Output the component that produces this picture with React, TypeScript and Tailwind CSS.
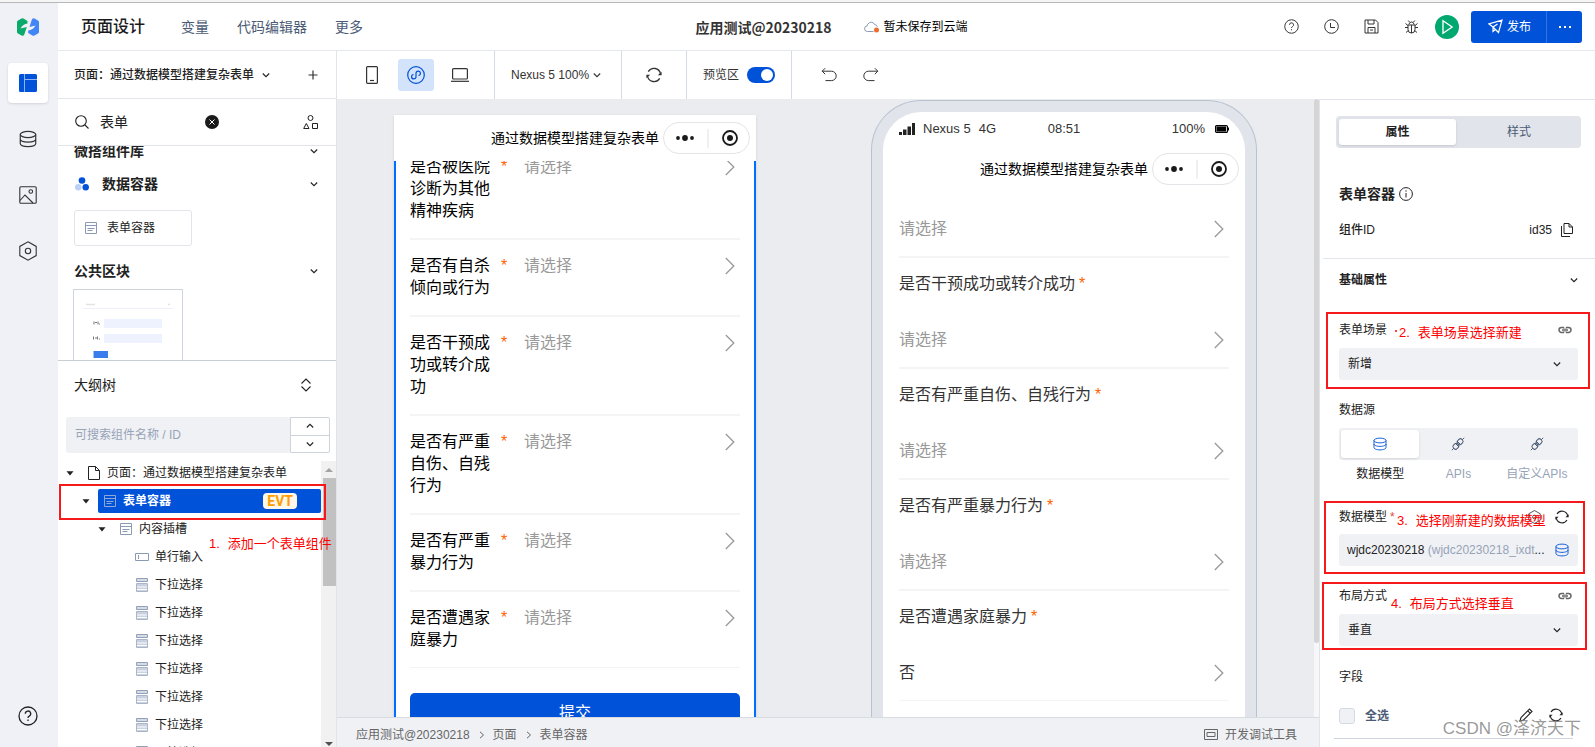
import React, { useState } from "react";

type IconProps = { className?: string; children?: React.ReactNode; box?: string; width?: number };

function Icon({ className = "size-4", children, box = "0 0 16 16", width = 1 }: IconProps) {
  return (
    <svg viewBox={box} className={className} fill="none" stroke="currentColor" strokeWidth={width} aria-hidden="true">
      {children}
    </svg>
  );
}

const ChevronDown = ({ className = "size-2.5 shrink-0" }: { className?: string }) => (
  <Icon className={className} box="0 0 10 10" width={1.1}>
    <path d="M1.800 3.500 5 6.700l3.200-3.200" />
  </Icon>
);

const ChevronUp = () => (
  <Icon className="size-2.5 shrink-0" box="0 0 10 10" width={1.1}>
    <path d="M1.800 6.500 5 3.300l3.200 3.200" />
  </Icon>
);

const ArrowRight = () => (
  <Icon className="h-[18px] w-2.5 shrink-0 text-[#999]" box="0 0 10 18" width={1.3}>
    <path d="M.8 1 8.800 9l-8 8" />
  </Icon>
);

const Refresh = ({ className = "size-4" }: { className?: string }) => (
  <Icon className={className} width={1.3}>
    <path d="M2.300 4.600A6.600 6.600 0 0 1 14.500 7M13.700 11.400A6.600 6.600 0 0 1 1.500 9" />
    <path d="M15.600 4.800V8.200H11.800zM.4 11.200V7.800H4.200z" fill="currentColor" stroke="none" />
  </Icon>
);

const Database = ({ className = "size-5" }: { className?: string }) => (
  <Icon className={className} box="0 0 20 20" width={1.3}>
    <ellipse cx="10" cy="5" rx="8.600" ry="3.400" />
    <path d="M1.400 5v10c0 1.900 3.800 3.400 8.600 3.400s8.600-1.500 8.600-3.400V5M1.400 10c0 1.900 3.800 3.400 8.600 3.400s8.600-1.500 8.600-3.400" />
  </Icon>
);

const FormIcon = ({ className = "size-3 shrink-0 text-[#8a9ab5]" }: { className?: string }) => (
  <Icon className={className} box="0 0 12 12">
    <path d="M.5.5h11v11H.5zM.5 3.500h11" />
    <path d="M2.500 6.500h7M2.500 8.500h5" />
  </Icon>
);

const InputIcon = () => (
  <Icon className="h-3.5 w-3.5 shrink-0 text-[#8a9ab5]" box="0 0 14 14">
    <path d="M.5 3.500h13v7H.5zM3.500 5v4" />
  </Icon>
);

const SelectIcon = () => (
  <svg viewBox="0 0 14 14" className="h-3.5 w-3.5 shrink-0" fill="none" aria-hidden="true">
    <path d="M1.500.5h11v3h-11z" fill="#d5dbe6" stroke="#93a1b8" />
    <path d="M2 4h10v1H2z" fill="#fff" />
    <path d="M1.500 5.500h11v8h-11z" fill="#fff" stroke="#a9b5c8" />
    <path d="M2 6h10v2.500H2zM2 9.500h10v1.500H2zM2 12h10v1H2z" fill="#c9d1de" />
  </svg>
);

const LinkIcon = () => (
  <Icon className="h-2 w-3.5 text-[#666]" box="0 0 14 8" width={1.500}>
    <path d="M6 1.500H3.500a2.500 2.500 0 0 0 0 5H6M8 1.500h2.500a2.500 2.500 0 0 1 0 5H8M4 4h6" />
    <path d="M6 1.500V3M8 6.500V5M6 6.500V5M8 1.500V3" strokeWidth={0.8} />
  </Icon>
);

const PlugIcon = () => (
  <Icon className="size-3.5 text-[#4b5b76]" box="0 0 14 14">
    <path d="M.8 13.200l2-2M11.200 2.800l2-2" />
    <rect x="-3.300" y="-2.500" width="5.800" height="5" rx="2" transform="translate(5.200 9) rotate(-45)" />
    <rect x="-2.500" y="-2.500" width="5.800" height="5" rx="2" transform="translate(8.800 5) rotate(-45)" />
    <path d="M4 6l4 4M6 4l4 4" />
  </Icon>
);

const HelpIcon = ({ className = "size-[15px]" }: { className?: string }) => (
  <Icon className={className} box="0 0 20 20" width={1.3}>
    <circle cx="10" cy="10" r="9" />
    <path d="M7.300 7.800a2.700 2.700 0 1 1 4 2.300c-.9.5-1.300 1-1.300 1.900M10 13.500v1.500" />
  </Icon>
);

const HexIcon = ({ className = "h-5 w-[18px]" }: { className?: string }) => (
  <Icon className={className} box="0 0 18 20" width={1.1}>
    <path d="M9 .8 17.200 5.400v9.200L9 19.200.8 14.600V5.400z" />
    <circle cx="9" cy="10" r="2.700" />
  </Icon>
);

function Rail() {
  return (
    <nav aria-label="主导航" className="flex w-[58px] shrink-0 flex-col items-center bg-[#f0f1f6] pr-0.5 pb-[21px]">
      <a href="#home" aria-label="首页" className="mt-[15px] block">
        <svg viewBox="0 0 22 18" className="h-[18px] w-[22px]" aria-hidden="true">
          <path d="M0 4Q0 3 1 2.400L4.600.4Q5.500-.1 6.500.5L10.500 3 10.500 5.500Q6 6 3.500 10.500L9.800 9 7.300 16.500Q6.500 18.500 4.500 17.500L1 15.500Q0 14.900 0 13.900z" fill="#0aaa6d" />
          <path d="M22 4v9.800q0 1.100-1 1.700l-3.500 2q-1.100.6-2.100 0L11.200 15v-2.400Q16 12 18.500 7.500L12.500 9 14.700 2Q15.500-.5 17.500.5l3.500 2Q22 3 22 4z" fill="#4285f4" />
        </svg>
      </a>
      <button aria-label="页面" className="mt-[27px] flex size-10 items-center justify-center rounded bg-white shadow-sm">
        <svg viewBox="0 0 18 18" className="size-[18px]" aria-hidden="true">
          <path d="M0 1.500Q0 0 1.500 0H5v18H1.500Q0 18 0 16.500zM6 0h10.500Q18 0 18 1.500V5H6zM6 6h12v10.500q0 1.500-1.500 1.500H6z" fill="#0052d9" />
          <path d="M5.500 0v18M5.500 5.500H18" stroke="#8fb5f5" />
        </svg>
      </button>
      <button aria-label="数据" className="mt-[26px] flex size-5 items-center justify-center text-[#333]"><Database className="size-[18px]" /></button>
      <button aria-label="素材" className="mt-9 flex size-5 items-center justify-center text-[#333]">
        <Icon className="size-[18px]" box="0 0 18 18" width={1.1}>
          <rect x=".8" y=".8" width="16.400" height="16.400" rx="1" />
          <circle cx="11.800" cy="5.500" r="1.800" />
          <path d="M1 14.500l5-5.500 8 8" />
        </Icon>
      </button>
      <button aria-label="设置" className="mt-9 flex size-5 items-center justify-center text-[#333]"><HexIcon /></button>
      <button aria-label="帮助" className="mt-auto flex size-5 items-center justify-center text-[#222]"><HelpIcon className="size-5" /></button>
    </nav>
  );
}

function Header() {
  return (
    <header className="flex h-12 shrink-0 items-center border-b border-[#e5e8f0] bg-white pr-[13px] pl-[23px]">
      <nav aria-label="页面菜单" className="flex flex-1 items-center text-sm text-[#4b5b76]">
        <h1 className="mr-9 text-base font-medium text-[#1a1a1a]">页面设计</h1>
        <a href="#vars" className="mr-7">变量</a>
        <a href="#code" className="mr-7">代码编辑器</a>
        <a href="#more">更多</a>
      </nav>
      <div className="flex items-center">
        <strong className="mr-8 font-['Noto_Sans_CJK_SC',sans-serif] text-sm font-bold text-[#333]">应用测试@20230218</strong>
        <svg viewBox="0 0 16 12" className="mr-1 h-3 w-4" fill="none" aria-hidden="true">
          <path d="M9.500 10.500H3.500a2.800 2.800 0 0 1-.3-5.600Q2.900 3.500 4 3A3.600 3.600 0 0 1 10.500 3.500a3 3 0 0 1 2.800 2.200" stroke="#8a9ab5" />
          <circle cx="12.500" cy="9" r="2.500" fill="#ed6b2d" />
        </svg>
        <span className="text-xs text-black">暂未保存到云端</span>
      </div>
      <div className="flex flex-1 items-center justify-end text-[#333]">
        <div className="mr-4 flex items-center gap-[25px]">
          <button aria-label="帮助"><HelpIcon /></button>
          <button aria-label="历史">
            <Icon className="size-[15px]" box="0 0 15 15"><circle cx="7.500" cy="7.500" r="6.800" /><path d="M6.500 4v4.500H11" /></Icon>
          </button>
          <button aria-label="保存">
            <Icon className="size-[15px]" box="0 0 15 15">
              <path d="M1 1h10.500L14 3.500V14H1zM4 1v4h6V1M4 14V8.500h7V14M6 11h3" />
            </Icon>
          </button>
          <button aria-label="调试">
            <Icon className="size-[15px]" box="0 0 15 15">
              <path d="M4 6h7v4.500a3.500 3.500 0 0 1-7 0zM5 5.500a2.500 2.500 0 0 1 5 0M7.500 6v8M4 8.500H1M11 8.500h3M4 6.500 1.500 4.500M11 6.500l2.500-2M4.300 11.500l-2.300 2M10.700 11.500l2.300 2M5.500 3 4.200 1.500M9.500 3l1.300-1.500" />
            </Icon>
          </button>
        </div>
        <button aria-label="预览" className="mr-3 flex size-6 items-center justify-center rounded-full bg-[#00a870] text-white">
          <Icon className="size-4" box="0 0 14 14" width={1.2}><path d="M3.500 1.500 11.500 7l-8 5.500z" /></Icon>
        </button>
        <div className="flex h-8 overflow-hidden rounded-[3px] bg-[#0052d9] text-xs text-white">
          <button className="flex w-[75px] items-center justify-center gap-1 pl-0.5">
            <Icon className="size-[15px]" box="0 0 15 15" width={1.2}><path d="M14 1.200.8 4.800 5 8l5.500 5.500zM5 8v4.500L7.300 10.500M5 8 9.500 5" /></Icon>
            发布
          </button>
          <button aria-label="更多发布选项" className="flex w-9 items-center justify-center border-l border-[#3375e0]">
            <svg viewBox="0 0 14 4" className="h-1 w-3.5" fill="currentColor" aria-hidden="true"><rect x="1" y="1" width="2" height="2" /><rect x="6" y="1" width="2" height="2" /><rect x="11" y="1" width="2" height="2" /></svg>
          </button>
        </div>
      </div>
    </header>
  );
}

function Toolbar() {
  const [preview, setPreview] = useState(true);
  return (
    <div className="flex h-12 shrink-0 bg-white text-xs text-[#333]">
      <div className="flex w-[158px] items-center border-r border-[#d5dbe4] pl-[29px]">
        <button aria-label="手机" className="mr-5">
          <Icon className="h-[18px] w-3" box="0 0 12 18" width={1.2}><rect x=".6" y=".6" width="10.800" height="16.800" rx="1" /><path d="M4 14.500h4" /></Icon>
        </button>
        <button aria-label="小程序" className="mr-[17px] flex h-8 w-9 items-center justify-center rounded-[3px] bg-[#d4e3fc] text-[#0052d9]">
          <Icon className="size-[18px]" box="0 0 18 18" width={1.2}>
            <circle cx="9" cy="9" r="8.300" />
            <path d="M6.500 8.500a2.200 2.200 0 1 0 2.500 2.300V7.200a2.200 2.200 0 1 1 2.500 2.300" />
          </Icon>
        </button>
        <button aria-label="电脑">
          <Icon className="h-3.5 w-[18px]" box="0 0 18 14" width={1.2}><rect x="1.600" y=".6" width="14.800" height="10.400" rx="1" /><path d="M0 13.300h18" /></Icon>
        </button>
      </div>
      <button className="flex w-[127px] items-center gap-[3px] border-r border-[#d5dbe4] pl-4">
        Nexus 5 100% <ChevronDown />
      </button>
      <button aria-label="刷新" className="flex w-[65px] items-center justify-center border-r border-[#d5dbe4]"><Refresh className="size-4" /></button>
      <div className="flex w-[105px] items-center justify-center gap-2 border-r border-[#d5dbe4]">
        <label htmlFor="preview-switch">预览区</label>
        <button id="preview-switch" role="switch" aria-checked={preview} onClick={() => setPreview(!preview)} className={preview ? "flex h-4 w-7 items-center justify-end rounded-full bg-[#0052d9] px-0.5" : "flex h-4 w-7 items-center rounded-full bg-gray-400 px-0.5"}>
          <span className="size-3 rounded-full bg-white" />
        </button>
      </div>
      <div className="flex items-center gap-[26px] pl-[29px]">
        <button aria-label="撤销">
          <Icon className="size-4"><path d="M4.200 1.200 1.200 4.200l3 3M1.200 4.200h9.300a4.700 4.700 0 0 1 0 9.400H4.500" /></Icon>
        </button>
        <button aria-label="重做">
          <Icon className="size-4"><path d="M11.800 1.200l3 3-3 3M14.800 4.200H5.500a4.700 4.700 0 0 0 0 9.400h6" /></Icon>
        </button>
      </div>
    </div>
  );
}

function ComponentLibrary() {
  return (
    <>
      <div className="flex h-[47px] shrink-0 items-center border-b border-[#e1e4ea] pr-[18px] pl-[17px] text-[#222]">
        <Icon className="mr-[11px] size-3.5 shrink-0" box="0 0 14 14" width={1.1}><circle cx="6" cy="6" r="5.300" /><path d="M10 10l3.500 3.500" /></Icon>
        <input aria-label="搜索组件" defaultValue="表单" className="w-[105px] text-sm outline-none" />
        <button aria-label="清空" className="flex size-3.5 items-center justify-center rounded-full bg-[#1a1a1a] text-white">
          <Icon className="size-2" box="0 0 8 8"><path d="M1.500 1.500l5 5M6.500 1.500l-5 5" /></Icon>
        </button>
        <button aria-label="组件分类" className="ml-auto">
          <Icon className="h-3.5 w-[15px]" box="0 0 15 14"><circle cx="7.500" cy="3" r="2.500" /><path d="M3.300 8.500 6 13.500H.7zM9.500 8.500h5v5h-5z" /></Icon>
        </button>
      </div>
      <div className="flex h-[215px] shrink-0 flex-col overflow-hidden border-b border-[#c9cdd4] px-4 text-sm font-bold text-[#222]">
        <button className="-mt-[5px] flex h-5 shrink-0 items-center justify-between pr-px">微搭组件库 <ChevronDown /></button>
        <button className="mt-[13px] flex h-5 shrink-0 items-center pr-px">
          <svg viewBox="0 0 14 14" className="mr-[13px] ml-px size-3.5" aria-hidden="true"><circle cx="7" cy="3.500" r="3.300" fill="#0052d9" /><circle cx="3.200" cy="10.300" r="3.200" fill="#bbd0f8" /><circle cx="10.700" cy="10.300" r="3.200" fill="#0052d9" /></svg>
          数据容器 <span className="ml-auto"><ChevronDown /></span>
        </button>
        <button className="mt-4 flex h-9 w-[118px] shrink-0 items-center gap-2.5 rounded-[3px] border border-[#e1e4ea] pl-2.5 text-xs font-normal"><FormIcon />表单容器</button>
        <button className="mt-[15px] flex h-5 shrink-0 items-center justify-between pr-px">公共区块 <ChevronDown /></button>
        <button aria-label="表单区块" className="mt-2 -ml-px w-[110px] shrink-0 border border-[#cfd5df]">
          <svg viewBox="0 0 108 100" className="h-[100px] w-[108px]" aria-hidden="true">
            <path d="M12 14.500h9M94 14.500h2" stroke="#e3e3e3" strokeWidth="1.500" />
            <path d="M9 18.500h90" stroke="#eef1f8" />
            <path d="M30 29h58v9H30zM30 44h58v9H30z" fill="#eef2fe" />
            <path d="M20 31.500v3M21 32.500h2M24 31.500v3M25 34h1M19.500 46.500v3M21 48h2M23.500 46.500v3M25 49h1" stroke="#777" />
            <path d="M19.500 61H34v7H19.500z" fill="#3b7cec" />
          </svg>
        </button>
      </div>
    </>
  );
}

const Caret = () => (
  <svg viewBox="0 0 8 5" className="h-[5px] w-2 shrink-0" aria-hidden="true"><path d="M.5.2h7L4 4.600z" fill="#222" /></svg>
);

function OutlineTree() {
  const fields = ["下拉选择", "下拉选择", "下拉选择", "下拉选择", "下拉选择", "下拉选择", "下拉选择"];
  return (
    <section className="flex min-h-0 flex-1 flex-col text-xs text-[#222]">
      <div className="flex h-12 shrink-0 items-center justify-between pr-6 pl-4">
        <h2 className="text-sm">大纲树</h2>
        <button aria-label="展开收起">
          <Icon className="h-3.5 w-3" box="0 0 12 14" width={1.1}><path d="M1.500 5.500 6 1l4.500 4.500M1.500 8.500 6 13l4.500-4.500" /></Icon>
        </button>
      </div>
      <div className="mt-2 mr-1.5 ml-2 flex h-9 shrink-0">
        <input aria-label="搜索大纲树" placeholder="可搜索组件名称 / ID" className="min-w-0 flex-1 rounded-l-[3px] bg-[#f0f1f5] pl-[9px] outline-none placeholder:text-[#97a3b7]" />
        <div className="flex w-10 flex-col divide-y divide-[#cfd3da] rounded-r-[2px] border border-[#cfd3da]">
          <button aria-label="上一个" className="flex flex-1 items-center justify-center"><ChevronUp /></button>
          <button aria-label="下一个" className="flex flex-1 items-center justify-center"><ChevronDown /></button>
        </div>
      </div>
      <div className="mt-1.5 flex min-h-0 flex-1">
        <div className="relative z-10 flex min-w-0 flex-1">
          <ul className="min-w-0 flex-1 overflow-hidden">
            <li className="flex h-7 items-center pl-2"><Caret />
              <Icon className="mr-[7px] ml-3.5 h-3.5 w-3 shrink-0" box="0 0 12 14"><path d="M.5.5h7l4 4v9H.5zM7.500.5v4h4" /></Icon>
              <span className="whitespace-nowrap">页面：通过数据模型搭建复杂表单</span>
            </li>
            <li className="flex h-7 items-center pl-6"><Caret />
              <button className="ml-2 flex h-6 min-w-0 flex-1 items-center rounded-[2px] bg-[#0052d9] pl-1.5 font-bold text-white">
                <FormIcon className="mr-[7px] size-3 shrink-0 text-[#8fa8dc]" />表单容器
                <span className="mr-6 ml-auto h-4 rounded bg-[#fff7ea] px-1 font-['Roboto',sans-serif] text-sm leading-4 font-bold text-[#ff9d00]">EVT</span>
              </button>
            </li>
            <li className="flex h-7 items-center pl-10"><Caret /><FormIcon className="mr-[7px] ml-3.5 size-3 shrink-0 text-[#8a9ab5]" />内容插槽</li>
            <li className="flex h-7 items-center gap-1.5 pl-[77px]"><InputIcon />单行输入</li>
            {fields.map((f, i) => (
              <li key={i} className="flex h-7 items-center gap-1.5 pl-[77px]"><SelectIcon />{f}</li>
            ))}
          </ul>
          <div className="pointer-events-none absolute top-[25px] -right-[5px] left-px h-9 border-2 border-[#f5191c]" />
          <p className="absolute top-[76px] left-[151px] flex gap-2 text-[13px] leading-[18px] whitespace-nowrap text-[#f00]"><span>1.</span>添加一个表单组件</p>
        </div>
        <div className="mt-0.5 flex w-[15px] shrink-0 flex-col items-end bg-[#f1f1f1]">
          <svg viewBox="0 0 15 17" className="h-[17px] w-[15px]" aria-hidden="true"><path d="M4 11h8L8 7z" fill="#a3a3a3" /></svg>
          <span className="h-[108px] w-[13px] bg-[#c1c1c1]" />
          <svg viewBox="0 0 15 8" className="mt-auto h-2 w-[15px]" aria-hidden="true"><path d="M4 3h8L8 7z" fill="#505050" /></svg>
        </div>
      </div>
    </section>
  );
}

function Capsule() {
  return (
    <div className="flex h-8 w-[87px] shrink-0 items-center rounded-full border border-[#e3e4e8] text-[#1a1a1a]">
      <button aria-label="更多" className="flex w-[43px] justify-center pr-0.5">
        <svg viewBox="0 0 18 6" className="h-1.5 w-[18px]" fill="currentColor" aria-hidden="true"><circle cx="2" cy="3" r="1.900" /><circle cx="9" cy="3" r="2.900" /><circle cx="16" cy="3" r="1.900" /></svg>
      </button>
      <span className="h-[19px] w-0.5 bg-[#f0f0f2]" />
      <button aria-label="关闭" className="flex flex-1 justify-center pl-0.5">
        <Icon className="size-4" width={1.800}><circle cx="8" cy="8" r="7" /><circle cx="8" cy="8" r="3" fill="currentColor" stroke="none" /></Icon>
      </button>
    </div>
  );
}

const designRows = [
  "是否被医院诊断为其他精神疾病",
  "是否有自杀倾向或行为",
  "是否干预成功或转介成功",
  "是否有严重自伤、自残行为",
  "是否有严重暴力行为",
  "是否遭遇家庭暴力",
];

function DesignPhone() {
  return (
    <section className="mt-4 flex w-[362px] shrink-0 flex-col bg-white text-base text-black shadow-sm">
      <div className="flex h-[46px] shrink-0 items-center justify-end gap-1 pr-1.5 text-sm">
        <span>通过数据模型搭建复杂表单</span>
        <Capsule />
      </div>
      <div className="min-h-0 flex-1 overflow-hidden border-x-2 border-[#006eff] px-3.5">
        <div className="-mt-5">
          {designRows.map((t, i) => (
            <div key={t} className="flex border-b-2 border-[#f4f4f4] pt-[15px] pb-4 leading-[22px] last:border-b">
              <span id={"d" + i} className="w-20">{t}</span>
              <span className="ml-[11px] w-[23px] text-[#ff6100]">*</span>
              <button aria-labelledby={"d" + i} className="flex h-[22px] flex-1 items-center justify-between pr-[5px] text-[#999]">请选择 <ArrowRight /></button>
            </div>
          ))}
        </div>
        <button className="mt-[25px] h-10 w-full rounded-[5px] bg-[#0052d9] text-white">提交</button>
      </div>
    </section>
  );
}

const previewRows = [
  { label: "是否干预成功或转介成功", value: "请选择" },
  { label: "是否有严重自伤、自残行为", value: "请选择" },
  { label: "是否有严重暴力行为", value: "请选择" },
  { label: "是否遭遇家庭暴力", value: "否" },
];

function PreviewPhone() {
  return (
    <section className="mt-px flex w-[386px] shrink-0 flex-col rounded-t-[50px] border border-b-0 border-[#b9c3d0] bg-[#e1e4ea] px-[11px] pt-[11px]">
      <div className="min-h-0 flex-1 overflow-hidden rounded-t-[38px] bg-white text-base text-[#333]">
        <div className="grid h-[33px] grid-cols-3 items-center px-4 text-[13px]">
          <div className="flex items-center gap-2">
            <svg viewBox="0 0 16 12" className="h-3 w-4" fill="#222" aria-hidden="true"><path d="M0 9h3v3H0zM4 6.500h3.500V12H4zM8.500 3.500h3.500V12H8.500zM13 0h3v12h-3z" /></svg>
            <span>Nexus 5</span>
            <span>4G</span>
          </div>
          <span className="text-center">08:51</span>
          <div className="flex items-center justify-end gap-2.5">
            <span>100%</span>
            <svg viewBox="0 0 14 8" className="h-2 w-3.5" aria-hidden="true"><rect x=".6" y=".6" width="11.800" height="6.800" rx="1" fill="none" stroke="#000" strokeWidth="1.200" /><path d="M1.500 1.500h9.500v5h-9.500zM12.500 2.500H14v3h-1.500z" fill="#000" /></svg>
          </div>
        </div>
        <div className="flex h-12 items-center justify-end gap-1 pr-1.5 text-sm text-black">
          <span>通过数据模型搭建复杂表单</span>
          <Capsule />
        </div>
        <div className="px-4 pt-[25px] leading-[22px]">
          <button aria-label="请选择" className="flex w-full items-center justify-between border-b-2 border-[#f4f4f4] pr-[5px] pb-4 text-[#999]">请选择 <ArrowRight /></button>
          {previewRows.map((r, i) => (
            <div key={r.label} className="border-b-2 border-[#f4f4f4] pt-[15px] pb-4 last:border-b">
              <div className="flex gap-1"><span id={"p" + i}>{r.label}</span><span className="text-[#ff6100]">*</span></div>
              <button aria-labelledby={"p" + i} className={r.value === "否" ? "mt-[34px] flex w-full items-center justify-between pr-[5px]" : "mt-[34px] flex w-full items-center justify-between pr-[5px] text-[#999]"}>
                {r.value} <ArrowRight />
              </button>
            </div>
          ))}
        </div>
      </div>
    </section>
  );
}

function StatusBar() {
  return (
    <footer className="flex h-[30px] shrink-0 items-center justify-between border-t border-[#d8dbe2] bg-[#f0f1f5] pt-1 pr-[22px] pl-[19px] text-xs text-[#666]">
      <nav aria-label="路径" className="flex items-center gap-2">
        <a href="#app">应用测试@20230218</a>
        <Icon className="h-2 w-[7px]" box="0 0 7 8"><path d="M2 .8 5.500 4 2 7.200" /></Icon>
        <a href="#page">页面</a>
        <Icon className="h-2 w-[7px]" box="0 0 7 8"><path d="M2 .8 5.500 4 2 7.200" /></Icon>
        <a href="#form">表单容器</a>
      </nav>
      <button className="flex items-center gap-[7px]">
        <Icon className="h-[11px] w-3.5" box="0 0 14 11"><path d="M.5.500h13v10H.5zM3 3.500h8v4H3z" /></Icon>
        开发调试工具
      </button>
    </footer>
  );
}

function Field({ id, label, options, children }: { id: string; label: string; options: string[]; children?: React.ReactNode }) {
  return (
    <div className="relative">
      <div className="flex h-[18px] items-center justify-between pr-1.5">
        <label htmlFor={id}>{label}</label>
        <button aria-label="绑定"><LinkIcon /></button>
      </div>
      <div className="mt-[9px] grid items-center rounded-[3px] bg-[#f0f1f5]">
        <select id={id} className="col-start-1 row-start-1 h-8 w-full appearance-none pr-8 pl-[9px] outline-none">
          {options.map((o) => <option key={o}>{o}</option>)}
        </select>
        <span className="pointer-events-none col-start-1 row-start-1 mr-4 justify-self-end"><ChevronDown /></span>
      </div>
      {children}
    </div>
  );
}

function Properties() {
  return (
    <aside className="relative flex w-[276px] shrink-0 flex-col overflow-hidden border-t border-l border-[#e1e4ea] bg-white text-xs text-[#222]">
      <div role="tablist" className="mt-4 mr-3.5 ml-4 flex h-8 shrink-0 rounded-[4px] bg-[#e1e4ea] p-[3px]">
        <button role="tab" aria-selected="true" className="w-[117px] rounded-[3px] bg-white font-bold shadow-sm">属性</button>
        <button role="tab" aria-selected="false" className="flex-1 pl-1 text-[#4b5b76]">样式</button>
      </div>
      <div className="mt-9 flex h-5 items-center gap-1 pl-[19px]">
        <h2 className="text-sm font-bold">表单容器</h2>
        <Icon className="size-3.5" box="0 0 14 14"><circle cx="7" cy="7" r="6.400" /><path d="M7 6v4.500M7 3.300v1.400" /></Icon>
      </div>
      <div className="mt-4 flex h-5 items-center pr-[22px] pl-[19px]">
        <span className="mr-auto font-medium">组件ID</span>
        <span className="mr-[9px]">id35</span>
        <button aria-label="复制">
          <Icon className="h-3.5 w-3" box="0 0 12 14"><path d="M3 .5h5l3.500 3.500v6.500H3zM8 .5V4h3.500M.5 3v10.500H9" /></Icon>
        </button>
      </div>
      <div className="mt-[18px] ml-[3px] border-t border-[#e1e4ea]" />
      <button className="mt-3 flex h-[18px] items-center justify-between pr-4 pl-[19px] font-bold">基础属性 <ChevronDown /></button>
      <div className="pt-8 pr-[17px] pl-[19px]">
        <Field id="scene" label="表单场景" options={["新增", "编辑", "查看"]}>
          <div className="pointer-events-none absolute -top-[9px] -right-3 -left-[13px] h-[77px] border-2 border-[#f5191c]" />
          <p className="absolute top-[3px] left-[60px] flex gap-2 text-[13px] leading-[18px] text-[#f00]"><span>2.</span>表单场景选择新建</p>
          <span className="absolute top-[9px] left-14 size-0.5 rounded-full bg-[#f00]" />
        </Field>
        <div className="mt-[21px] h-[18px] leading-[18px]">数据源</div>
        <div className="mt-[9px] flex h-8 rounded-[3px] bg-[#f0f1f5] p-0.5">
          <button aria-labelledby="src-model" className="flex flex-1 items-center justify-center rounded-[3px] bg-white text-[#0052d9] shadow-sm"><Database className="size-3.5" /></button>
          <button aria-labelledby="src-api" className="flex flex-1 items-center justify-center"><PlugIcon /></button>
          <button aria-labelledby="src-custom" className="flex flex-1 items-center justify-center"><PlugIcon /></button>
        </div>
        <div className="mt-[5px] grid h-[18px] grid-cols-3 px-0.5 text-center leading-[18px] whitespace-nowrap text-[#97a3b7]">
          <span id="src-model" className="text-[#222]">数据模型</span>
          <span id="src-api">APIs</span>
          <span id="src-custom">自定义APIs</span>
        </div>
        <div className="relative mt-[25px]">
          <div className="flex h-[18px] items-center">
            <label htmlFor="model" className="mr-[3px]">数据模型</label>
            <span className="mr-auto text-[#e54545]">*</span>
            <button aria-label="模型设置" className="mr-3.5"><HexIcon className="h-3.5 w-[13px]" /></button>
            <button aria-label="刷新模型" className="mr-[9px]"><Refresh className="size-3.5" /></button>
          </div>
          <button id="model" className="mt-2 flex h-8 w-full items-center rounded-[3px] bg-[#f0f1f5] pr-[9px] pl-2">
            <span className="flex-1 text-left whitespace-nowrap">wjdc20230218 <span className="text-[#97a3b7]">(wjdc20230218_ixdt</span>...</span>
            <Database className="size-3.5 text-[#0052d9]" />
          </button>
          <div className="pointer-events-none absolute -top-[7px] -right-[7px] -left-[15px] h-[73px] border-2 border-[#f5191c]" />
          <p className="absolute top-1 left-[58px] flex gap-2 text-[13px] leading-[18px] whitespace-nowrap text-[#f00]"><span>3.</span>选择刚新建的数据模型</p>
        </div>
        <div className="mt-[21px]">
          <Field id="layout" label="布局方式" options={["垂直", "水平"]}>
            <div className="pointer-events-none absolute -top-[5px] -right-[9px] -left-[17px] h-[68px] border-2 border-[#f5191c]" />
            <p className="absolute top-2 left-[52px] flex gap-2 text-[13px] leading-[18px] text-[#f00]"><span>4.</span>布局方式选择垂直</p>
          </Field>
        </div>
        <div className="mt-[22px] h-[18px] leading-[18px]">字段</div>
        <div className="mt-[22px] mr-[5px] -ml-[5px] flex h-[31px] items-start border-b border-[#cfd5df] pl-[5px]">
          <input id="all" type="checkbox" className="mr-2.5 size-4 shrink-0 appearance-none rounded-[3px] border border-[#d5dbe4] bg-[#f0f1f5]" />
          <label htmlFor="all" className="mr-auto leading-4 font-bold text-[#4b5b76]">全选</label>
          <button aria-label="编辑" className="mr-4"><Icon className="size-3.5" box="0 0 14 14" width={1.1}><path d="M1 13l1-3.500L10.500 1 13 3.500 4.500 12zM8.800 2.800l2.500 2.500" /></Icon></button>
          <button aria-label="刷新字段" className="mr-2.5"><Refresh className="size-3.5" /></button>
        </div>
      </div>
      <p className="pointer-events-none absolute right-3.5 bottom-1.5 text-[17px] leading-6 whitespace-nowrap text-[#777]/75">CSDN @泽济天下</p>
    </aside>
  );
}

export default function App() {
  return (
    <div className="flex h-screen flex-col overflow-hidden bg-white font-['Liberation_Sans','Noto_Sans_CJK_SC',sans-serif]">
      <div className="h-[3px] shrink-0 border-b border-[#b8b8b8] bg-[#f5f5f5]" />
      <div className="flex min-h-0 flex-1">
        <Rail />
        <div className="flex min-w-0 flex-1 flex-col">
          <Header />
          <div className="flex min-h-0 flex-1">
            <div className="z-10 flex w-[279px] shrink-0 flex-col overflow-hidden border-r border-[#e1e4ea] bg-white">
              <div className="flex h-12 shrink-0 items-center border-b border-[#e1e4ea] pr-[18px] pl-4">
                <button className="flex items-center gap-[7px] text-xs font-medium text-[#222]">页面：通过数据模型搭建复杂表单 <ChevronDown /></button>
                <button aria-label="新建页面" className="ml-auto text-[#333]"><Icon className="size-2.5" box="0 0 10 10" width={1.2}><path d="M5 .5v9M.5 5h9" /></Icon></button>
              </div>
              <ComponentLibrary />
              <OutlineTree />
            </div>
            <div className="flex min-w-0 flex-1 flex-col">
              <Toolbar />
              <div className="flex min-h-0 flex-1">
                <main className="flex min-w-0 flex-1 flex-col">
                  <div className="flex min-h-0 flex-1 bg-[#ebecf0]">
                    <div className="flex min-w-0 flex-1 justify-center gap-[115px] overflow-hidden">
                      <DesignPhone />
                      <PreviewPhone />
                    </div>
                    <div className="w-[5px] shrink-0 bg-[#f7f7f9]"><div className="h-[88%] rounded-full bg-[#d5d5d5]" /></div>
                  </div>
                  <StatusBar />
                </main>
                <Properties />
              </div>
            </div>
          </div>
        </div>
      </div>
    </div>
  );
}
